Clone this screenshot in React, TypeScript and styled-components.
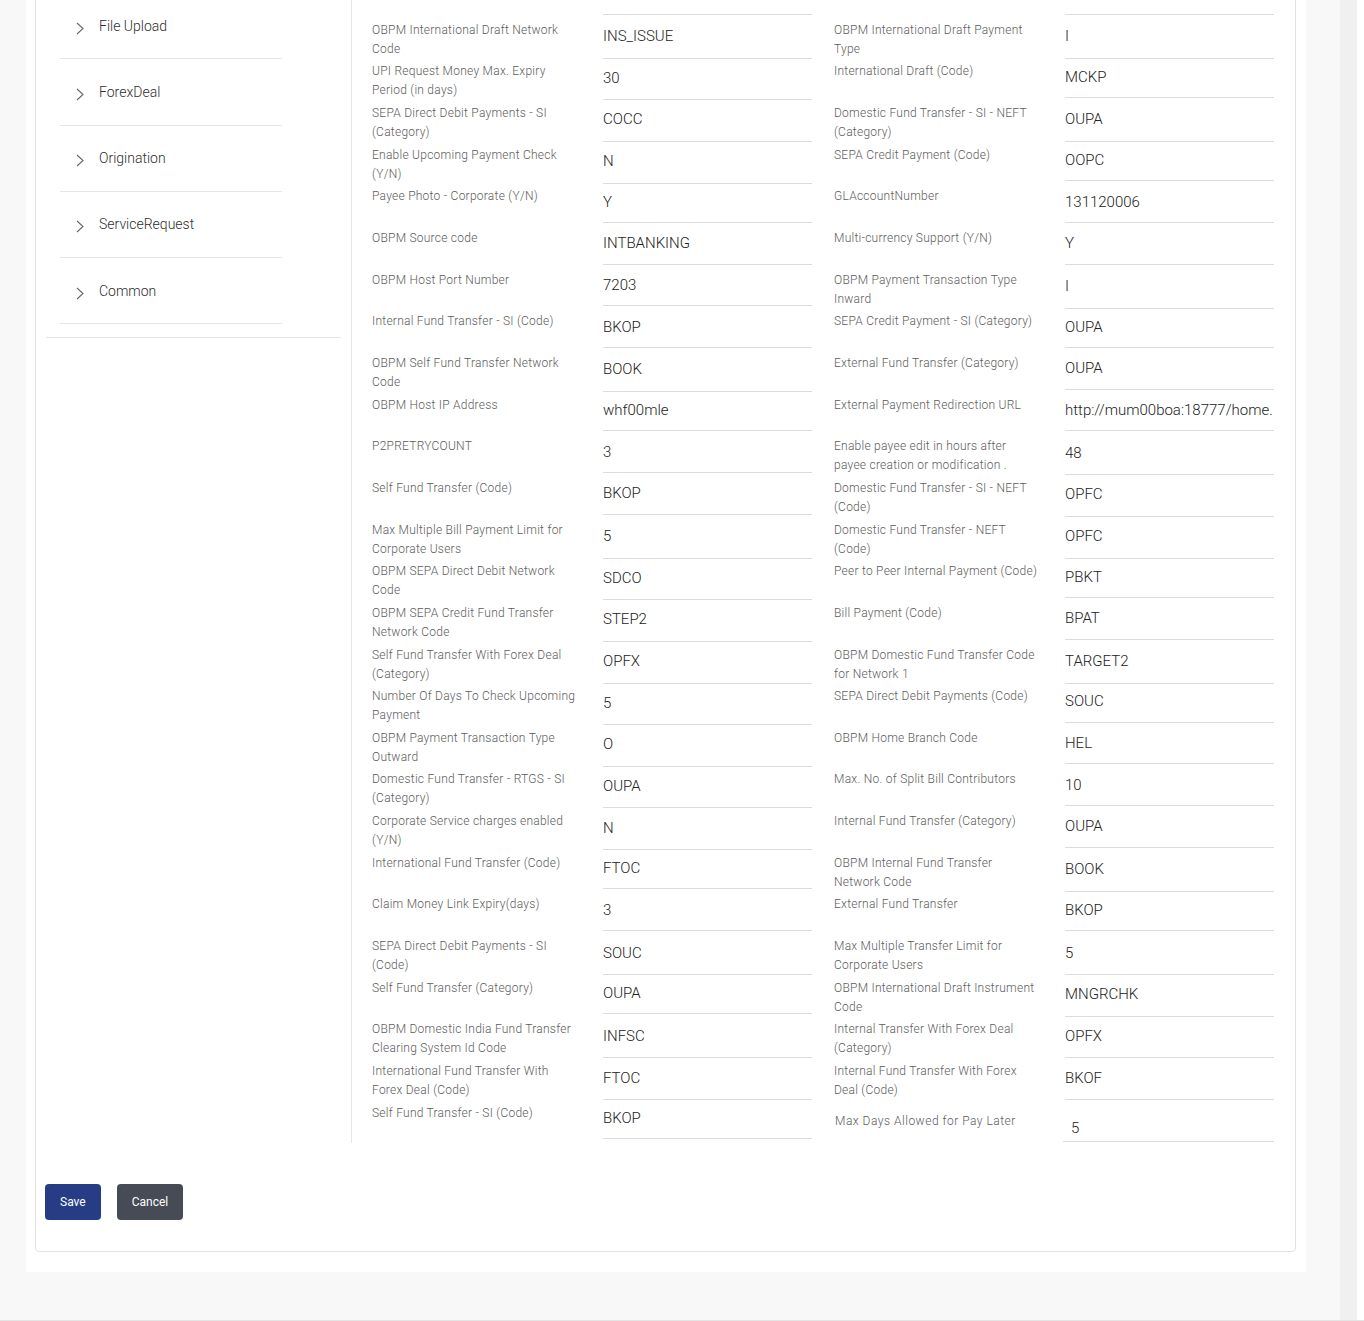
import { createGlobalStyle, styled } from 'styled-components';

type Pair = [string, string, string, string];

// label, value, label, value
const rows: Pair[] = [
  ['OBPM Network Code', '5', 'OBPM Transfer Code', 'FCFOP'],
  ['OBPM International Draft Network Code', 'INS_ISSUE', 'OBPM International Draft Payment Type', 'I'],
  ['UPI Request Money Max. Expiry Period (in days)', '30', 'International Draft (Code)', 'MCKP'],
  ['SEPA Direct Debit Payments - SI (Category)', 'COCC', 'Domestic Fund Transfer - SI - NEFT (Category)', 'OUPA'],
  ['Enable Upcoming Payment Check (Y/N)', 'N', 'SEPA Credit Payment (Code)', 'OOPC'],
  ['Payee Photo - Corporate (Y/N)', 'Y', 'GLAccountNumber', '131120006'],
  ['OBPM Source code', 'INTBANKING', 'Multi-currency Support (Y/N)', 'Y'],
  ['OBPM Host Port Number', '7203', 'OBPM Payment Transaction Type Inward', 'I'],
  ['Internal Fund Transfer - SI (Code)', 'BKOP', 'SEPA Credit Payment - SI (Category)', 'OUPA'],
  ['OBPM Self Fund Transfer Network Code', 'BOOK', 'External Fund Transfer (Category)', 'OUPA'],
  ['OBPM Host IP Address', 'whf00mle', 'External Payment Redirection URL', 'http://mum00boa:18777/home.'],
  ['P2PRETRYCOUNT', '3', 'Enable payee edit in hours after payee creation or modification .', '48'],
  ['Self Fund Transfer (Code)', 'BKOP', 'Domestic Fund Transfer - SI - NEFT (Code)', 'OPFC'],
  ['Max Multiple Bill Payment Limit for Corporate Users', '5', 'Domestic Fund Transfer - NEFT (Code)', 'OPFC'],
  ['OBPM SEPA Direct Debit Network Code', 'SDCO', 'Peer to Peer Internal Payment (Code)', 'PBKT'],
  ['OBPM SEPA Credit Fund Transfer Network Code', 'STEP2', 'Bill Payment (Code)', 'BPAT'],
  ['Self Fund Transfer With Forex Deal (Category)', 'OPFX', 'OBPM Domestic Fund Transfer Code for Network 1', 'TARGET2'],
  ['Number Of Days To Check Upcoming Payment', '5', 'SEPA Direct Debit Payments (Code)', 'SOUC'],
  ['OBPM Payment Transaction Type Outward', 'O', 'OBPM Home Branch Code', 'HEL'],
  ['Domestic Fund Transfer - RTGS - SI (Category)', 'OUPA', 'Max. No. of Split Bill Contributors', '10'],
  ['Corporate Service charges enabled (Y/N)', 'N', 'Internal Fund Transfer (Category)', 'OUPA'],
  ['International Fund Transfer (Code)', 'FTOC', 'OBPM Internal Fund Transfer Network Code', 'BOOK'],
  ['Claim Money Link Expiry(days)', '3', 'External Fund Transfer', 'BKOP'],
  ['SEPA Direct Debit Payments - SI (Code)', 'SOUC', 'Max Multiple Transfer Limit for Corporate Users', '5'],
  ['Self Fund Transfer (Category)', 'OUPA', 'OBPM International Draft Instrument Code', 'MNGRCHK'],
  ['OBPM Domestic India Fund Transfer Clearing System Id Code', 'INFSC', 'Internal Transfer With Forex Deal (Category)', 'OPFX'],
  ['International Fund Transfer With Forex Deal (Code)', 'FTOC', 'Internal Fund Transfer With Forex Deal (Code)', 'BKOF'],
  ['Self Fund Transfer - SI (Code)', 'BKOP', 'Max Days Allowed for Pay Later', '5'],
];

const menu = ['File Upload', 'ForexDeal', 'Origination', 'ServiceRequest', 'Common'];

const Chevron = () => (
  <svg width="8" height="13" viewBox="0 0 8 13" fill="none">
    <path d="M1 1 L7 6.5 L1 12" stroke="#666666" strokeWidth="1.1" />
  </svg>
);

export default function App() {
  return (
    <>
      <GlobalStyle />
      <Page>
        <Main>
          <Container>
            <Card>
              <Body>
                <Sidebar>
                  <Menu>
                    {menu.map((m) => (
                      <MenuItem key={m}>
                        <ChevronBox>
                          <Chevron />
                        </ChevronBox>
                        {m}
                      </MenuItem>
                    ))}
                  </Menu>
                </Sidebar>
                <Content>
                  {rows.map((r, i) => {
                    const last = i === rows.length - 1;
                    return (
                      <Row key={i}>
                        <Field>
                          <Label>{r[0]}</Label>
                          <Value>{r[1]}</Value>
                        </Field>
                        <Field $late={last}>
                          <Label $late={last}>{r[2]}</Label>
                          <Value $late={last}>{r[3]}</Value>
                        </Field>
                      </Row>
                    );
                  })}
                </Content>
              </Body>
              <ButtonBar>
                <Button $primary>Save</Button>
                <Button>Cancel</Button>
              </ButtonBar>
            </Card>
          </Container>
        </Main>
        <ScrollTrack />
      </Page>
    </>
  );
}

const GlobalStyle = createGlobalStyle`
  body {
    margin: 0;
    background: #ffffff;
    font-family: Roboto, "Liberation Sans", sans-serif;
  }
`;

const Page = styled.div`
  display: flex;
  height: 1321px;
  overflow: hidden;
  box-sizing: border-box;
  border-bottom: 1px solid #e4e4e4;
`;

const Main = styled.div`
  width: 1340px;
  flex-shrink: 0;
  background: #f8f8f8;
  padding-left: 26px;
  box-sizing: border-box;
`;

const ScrollTrack = styled.div`
  width: 17px;
  flex-shrink: 0;
  background: #f0f0f0;
`;

const Container = styled.div`
  width: 1280px;
  margin-top: -50px;
  background: #ffffff;
  padding: 0 10px 20px 9px;
  box-sizing: border-box;
`;

const Card = styled.div`
  border: 1px solid #e2e2e2;
  border-radius: 4px;
  background: #ffffff;
`;

const Body = styled.div`
  display: flex;
`;

const Sidebar = styled.aside`
  width: 316px;
  flex-shrink: 0;
  box-sizing: border-box;
  border-right: 1px solid #e6e6e6;
  padding-top: 42px;
`;

const Menu = styled.ul`
  list-style: none;
  margin: 0 10px;
  padding: 0 0 13px 14px;
  border-bottom: 1px solid #e5e5e5;
`;

const MenuItem = styled.li`
  width: 222px;
  height: 66.25px;
  box-sizing: border-box;
  border-bottom: 1px solid #e6e6e6;
  display: flex;
  align-items: center;
  padding-left: 16px;
  gap: 15px;
  font-size: 14px;
  font-weight: 300;
  color: #2e2e2e;
`;

const ChevronBox = styled.span`
  display: flex;
  margin-top: 5px;
`;

const Content = styled.div`
  flex: 1;
  padding: 22px 21px 1px 20px;
`;

const Row = styled.div`
  display: grid;
  grid-template-columns: 440px 440px;
  column-gap: 22px;
  align-items: start;
`;

const Field = styled.div<{ $late?: boolean }>`
  display: grid;
  grid-template-columns: 231px 209px;
  height: ${(p) => (p.$late ? '44px' : '41.67px')};
`;

const Label = styled.div<{ $late?: boolean }>`
  font-size: 12px;
  font-weight: 300;
  line-height: 19px;
  color: #5c5c5c;
  letter-spacing: ${(p) => (p.$late ? '0.5px' : '0.25px')};
  padding: ${(p) => (p.$late ? '14px 10px 0 1px' : '6px 26px 0 0')};
`;

const Value = styled.div<{ $late?: boolean }>`
  display: flex;
  align-items: ${(p) => (p.$late ? 'flex-end' : 'center')};
  box-sizing: border-box;
  border-bottom: 1px solid #dcdcdc;
  font-size: 15px;
  font-weight: 300;
  color: #222222;
  white-space: nowrap;
  overflow: hidden;
  padding: ${(p) => (p.$late ? '0 0 4px 8px' : '0')};
  margin-left: ${(p) => (p.$late ? '-2px' : '0')};
`;

const ButtonBar = styled.div`
  display: flex;
  gap: 16px;
  padding: 41px 9px 31px;
`;

const Button = styled.button<{ $primary?: boolean }>`
  height: 36px;
  padding: 0 15px;
  border: none;
  border-radius: 4px;
  font-family: Roboto, "Liberation Sans", sans-serif;
  font-size: 12px;
  font-weight: 400;
  color: #ffffff;
  background: ${(p) => (p.$primary ? '#263d86' : '#464b55')};
  cursor: pointer;
`;
